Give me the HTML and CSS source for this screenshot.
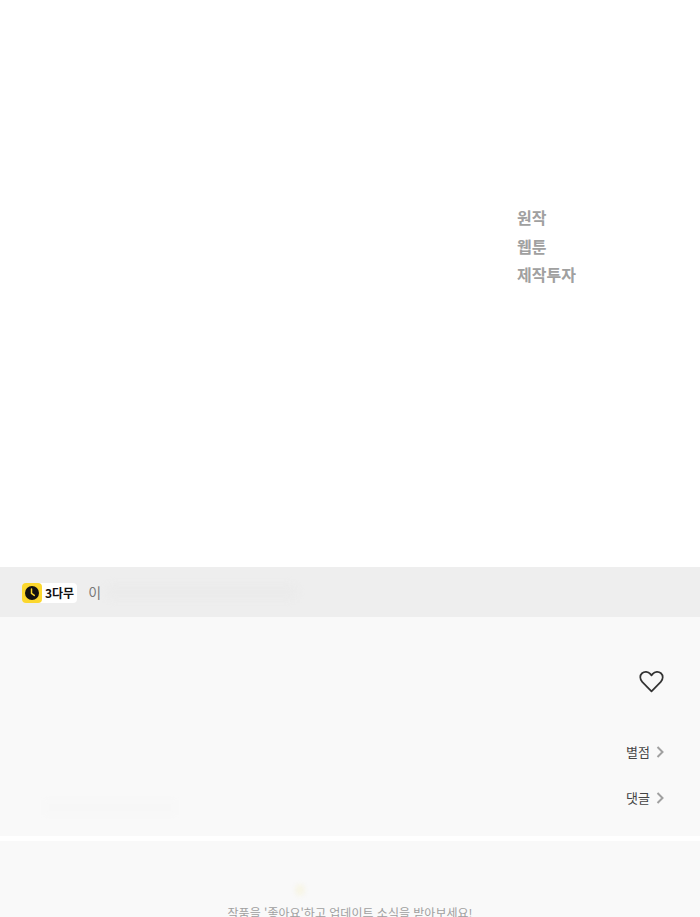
FILE: index.html
```html
<!DOCTYPE html>
<html lang="ko">
<head>
<meta charset="utf-8">
<title>작품</title>
<link rel="stylesheet" href="styles.css">
</head>
<body>
<div class="page">
  <section class="hero">
    <ul class="genres">
      <li>원작</li>
      <li>웹툰</li>
      <li>제작투자</li>
    </ul>
  </section>
  <section class="notice">
    <span class="badge">
      <span class="badge-icon">
        <svg width="20" height="20" viewBox="0 0 20 20">
          <rect width="20" height="20" rx="4" fill="#fbd72e"/>
          <circle cx="10" cy="10" r="7" fill="#111"/>
          <path d="M9.500 6v4.400l2.800 2" fill="none" stroke="#fbd72e" stroke-width="1.500" stroke-linecap="round"/>
        </svg>
      </span>
      <span class="badge-text">3다무</span>
    </span>
    <span class="notice-text">이</span>
    <span class="notice-blur"></span>
  </section>
  <section class="info">
    <div class="info-left">
      <span class="info-blur"></span>
    </div>
    <div class="info-right">
      <svg class="heart" width="25" height="23" viewBox="0 0 26 24">
        <path d="M13 22.200 3.300 12.300C.6 9.500.7 5.600 3.100 3.400c2.500-2.200 6.400-1.900 8.600.7L13 5.600l1.300-1.500c2.200-2.600 6.100-2.900 8.600-.7 2.400 2.200 2.500 6.100-.2 8.900z" fill="none" stroke="#333" stroke-width="1.800" stroke-linejoin="round"/>
      </svg>
      <nav class="links">
        <a class="link">별점<svg class="chev" width="8" height="12" viewBox="0 0 8 12"><path d="M1.500 1 6.500 6l-5 5" fill="none" stroke="#a0a0a0" stroke-width="2"/></svg></a>
        <a class="link">댓글<svg class="chev" width="8" height="12" viewBox="0 0 8 12"><path d="M1.500 1 6.500 6l-5 5" fill="none" stroke="#a0a0a0" stroke-width="2"/></svg></a>
      </nav>
    </div>
  </section>
  <section class="like">
    <span class="spark"></span>
    <p class="like-text">작품을 '좋아요'하고 업데이트 소식을 받아보세요!</p>
  </section>
</div>
</body>
</html>
```

FILE: styles.css
```css
html, body {
  margin: 0;
  padding: 0;
  height: 917px;
  overflow: hidden;
  background: #fff;
}
.page {
  display: flex;
  flex-direction: column;
  height: 917px;
  overflow: hidden;
  font-family: "Noto Sans CJK KR", "Noto Sans", sans-serif;
}
.hero {
  height: 567px;
  flex: none;
  padding: 203px 0 0 517px;
  box-sizing: border-box;
  background: #fff;
}
.genres {
  list-style: none;
  margin: 0;
  padding: 0;
}
.genres li {
  height: 28.500px;
  line-height: 28.500px;
  font-size: 16px;
  font-weight: 700;
  color: #a0a0a0;
}
.notice {
  height: 50px;
  flex: none;
  display: flex;
  align-items: center;
  padding-left: 22px;
  background: #eeeeee;
}
.badge {
  display: flex;
  align-items: center;
  height: 20px;
  background: #fff;
  border-radius: 4px;
  margin-top: 2px;
}
.badge-icon {
  display: flex;
}
.badge-text {
  padding: 0 3px 0 3px;
  font-size: 12px;
  line-height: 20px;
  font-weight: 700;
  color: #111;
}
.notice-text {
  margin-left: 11px;
  font-size: 14px;
  color: #777;
}
.notice-blur {
  width: 192px;
  height: 16px;
  margin-left: 4px;
  border-radius: 8px;
  background: #ebebeb;
  filter: blur(3px);
}
.info {
  height: 219px;
  flex: none;
  display: flex;
  justify-content: space-between;
  box-sizing: border-box;
  padding: 0 36px 0 45px;
  background: #f9f9f9;
}
.info-left {
  display: flex;
  align-items: flex-start;
  padding-top: 183px;
}
.info-blur {
  width: 130px;
  height: 15px;
  background: #f7f7f7;
  filter: blur(2px);
}
.info-right {
  display: flex;
  flex-direction: column;
  align-items: flex-end;
  padding-top: 53px;
}
.heart {
  display: block;
}
.links {
  display: flex;
  flex-direction: column;
  gap: 24px;
  margin-top: 48px;
}
.link {
  display: flex;
  align-items: center;
  justify-content: flex-end;
  gap: 6px;
  height: 22px;
  font-size: 13px;
  line-height: 22px;
  color: #444;
}
.like {
  margin-top: 5px;
  flex: 1;
  min-height: 0;
  position: relative;
  background: #f9f9f9;
  text-align: center;
  padding-top: 63px;
  box-sizing: border-box;
}
.spark {
  position: absolute;
  left: 295px;
  top: 43px;
  width: 10px;
  height: 12px;
  border-radius: 50%;
  background: #f7f5e6;
  filter: blur(2px);
}
.like-text {
  margin: 0;
  font-size: 12px;
  line-height: 18px;
  color: #a0a0a0;
}
```
